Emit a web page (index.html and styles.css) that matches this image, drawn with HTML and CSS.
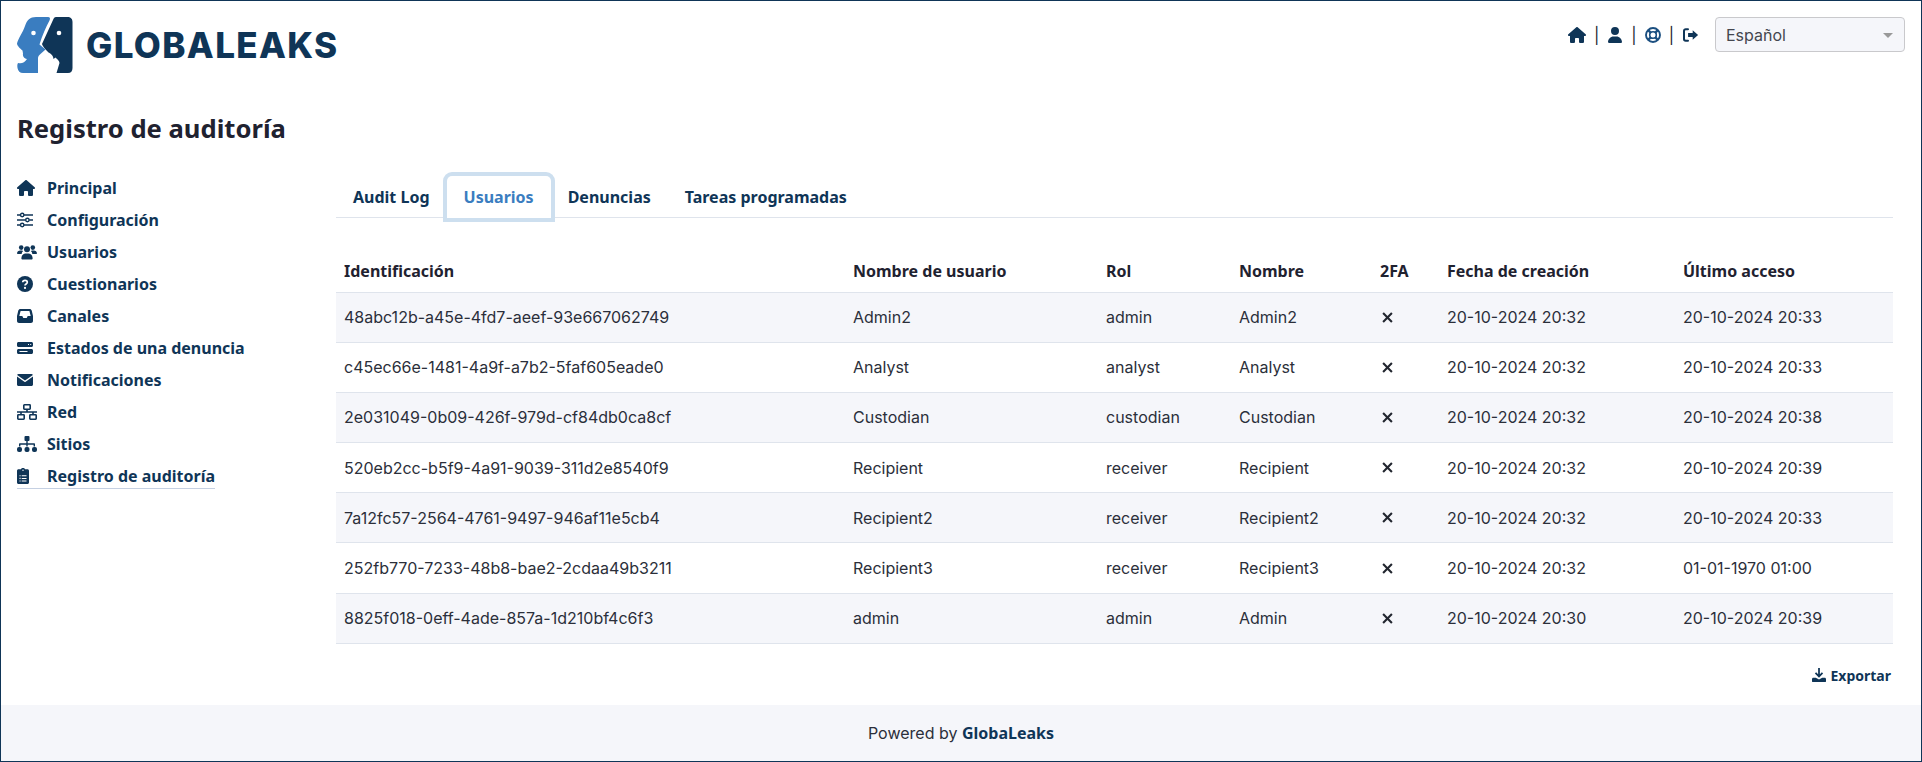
FILE: index.html
```html
<!DOCTYPE html>
<html lang="es">
<head>
    <meta charset="UTF-8">
    <title>GlobaLeaks</title>
    <meta name="viewport" content="width=device-width, initial-scale=1.0">
    <link rel="stylesheet" href="styles.css">
</head>
<body>

    <!-- Icon sprite -->
    <svg class="sprite" xmlns="http://www.w3.org/2000/svg">
        <symbol id="i-home" viewBox="0 0 576 512"><path d="M575.8 255.5c0 18-15 32.1-32 32.1h-32l.7 160.2c0 2.7-.2 5.4-.5 8.1V472c0 22.1-17.9 40-40 40H456c-1.1 0-2.2 0-3.3-.1c-1.4 .1-2.8 .1-4.2 .1H392c-22.1 0-40-17.9-40-40V384c0-17.7-14.3-32-32-32H256c-17.7 0-32 14.3-32 32v88c0 22.1-17.9 40-40 40H128.1c-1.5 0-3-.1-4.5-.2c-1.2 .1-2.4 .2-3.6 .2H104c-22.1 0-40-17.9-40-40V360c0-.9 0-1.9 .1-2.8V287.6H32c-18 0-32-14-32-32.1c0-9 3-17 10-24L266.4 8c7-7 15-8 22-8s15 2 21 7L564.8 231.5c8 7 12 15 11 24z"/></symbol>
        <symbol id="i-user" viewBox="0 0 448 512"><path d="M224 256A128 128 0 1 0 224 0a128 128 0 1 0 0 256zm-45.7 48C79.8 304 0 383.8 0 482.3C0 498.7 13.3 512 29.7 512H418.3c16.4 0 29.7-13.3 29.7-29.7C448 383.8 368.2 304 269.7 304H178.3z"/></symbol>
        <symbol id="i-ring" viewBox="0 0 16 16"><g fill="none" stroke="currentColor"><circle cx="8" cy="8" r="7" stroke-width="1.9"/><circle cx="8" cy="8" r="3.3" stroke-width="1.6"/><path d="M3.2 3.2l2.700 2.700M12.800 3.200l-2.700 2.700M3.200 12.800l2.700-2.700M12.800 12.800l-2.700-2.700" stroke-width="2.4"/></g></symbol>
        <symbol id="i-out" viewBox="0 0 16 16"><path d="M5.500 2.200H3.200A1.700 1.700 0 0 0 1.500 3.900v8.200a1.700 1.700 0 0 0 1.700 1.700h2.300" fill="none" stroke="currentColor" stroke-width="2" stroke-linecap="round"/><path d="M10.200 3.300L15.600 8l-5.400 4.700V10H5.600V6h4.600z"/></symbol>
        <symbol id="i-sliders" viewBox="0 0 16 16"><g fill="none" stroke="currentColor" stroke-width="1.4"><path d="M0 3h3.400M7 3h9M0 8h8.600M12.200 8H16M0 13h3.400M7 13h9"/><circle cx="5.200" cy="3" r="1.700"/><circle cx="10.400" cy="8" r="1.700"/><circle cx="5.200" cy="13" r="1.700"/></g></symbol>
        <symbol id="i-users" viewBox="0 0 20 16"><circle cx="4.200" cy="3.600" r="2.300"/><circle cx="15.800" cy="3.600" r="2.300"/><circle cx="10" cy="5.200" r="3"/><path d="M0 9.600C0 7.600 1.500 6.600 3.200 6.600h1.600c.6 0 1 .2 1.300.4-.8.8-1.400 1.800-1.400 3H.8C.3 10 0 9.900 0 9.600zM20 9.600c0-2-1.500-3-3.200-3h-1.600c-.6 0-1 .2-1.300.4.8.8 1.400 1.800 1.400 3h3.900c.5 0 .8-.1.8-.4z"/><path d="M4.400 14.400c0-2.600 1.800-5 4-5h3.200c2.200 0 4 2.400 4 5 0 .6-.5 1.100-1.100 1.100H5.500c-.6 0-1.100-.5-1.100-1.100z"/></symbol>
        <symbol id="i-question" viewBox="0 0 16 16"><circle cx="8" cy="8" r="8"/><path d="M5.700 6.300C5.800 5 6.800 4.300 8 4.300c1.300 0 2.300.8 2.300 2 0 1.700-2.300 1.600-2.300 3.200" fill="none" stroke="#fff" stroke-width="1.7"/><circle cx="8" cy="11.900" r="1.100" fill="#fff"/></symbol>
        <symbol id="i-inbox" viewBox="0 0 16 14"><path fill-rule="evenodd" d="M3.400 0h9.200c1 0 1.800.6 2.100 1.500L16 7v5c0 1.100-.9 2-2 2H2c-1.100 0-2-.9-2-2V7l1.300-5.500C1.600.6 2.400 0 3.400 0zm.2 2L2.300 7h3l1 2h3.400l1-2h3L12.400 2z"/></symbol>
        <symbol id="i-server" viewBox="0 0 16 12"><path fill-rule="evenodd" d="M1.500 0h13C15.300 0 16 .7 16 1.500v2c0 .8-.7 1.500-1.500 1.500h-13C.7 5 0 4.300 0 3.500v-2C0 .7.7 0 1.500 0zm9.500 2v1h1V2zm2.200 0v1h1V2zM1.500 7h13c.8 0 1.500.7 1.500 1.500v2c0 .8-.7 1.500-1.500 1.500h-13C.7 12 0 11.300 0 10.500v-2C0 7.700.7 7 1.500 7zm1 2v1h8V9z"/></symbol>
        <symbol id="i-mail" viewBox="0 0 16 12"><path d="M1.500 0h13c.6 0 1.200.4 1.400.9L8 6.400.1.900C.3.400.9 0 1.500 0zM0 2.600l7.400 5.200c.4.3.8.3 1.200 0L16 2.600v7.900c0 .8-.7 1.500-1.500 1.500h-13C.7 12 0 11.300 0 10.500z"/></symbol>
        <symbol id="i-network" viewBox="0 0 20 16"><g fill="none" stroke="currentColor" stroke-width="1.6"><rect x="6.800" y=".8" width="6.400" height="4.400" rx=".6"/><rect x=".8" y="10.800" width="6.400" height="4.400" rx=".6"/><rect x="12.800" y="10.800" width="6.400" height="4.400" rx=".6"/><path d="M10 5.200v2.800M0 8h20M4 8v2.800M16 8v2.800"/></g></symbol>
        <symbol id="i-sitemap" viewBox="0 0 20 16"><rect x="7.500" y="0" width="5" height="5" rx="1"/><path d="M9.300 5h1.400v2.300H17c.6 0 1 .4 1 1v2.200h-1.400V8.700h-5.900v1.800H9.300V8.700H3.400v1.800H2V8.300c0-.6.400-1 1-1h6.300z"/><rect x="0" y="11" width="5" height="5" rx="2"/><rect x="7.500" y="11" width="5" height="5" rx="2"/><rect x="15" y="11" width="5" height="5" rx="2"/></symbol>
        <symbol id="i-clipboard" viewBox="0 0 12 16"><path fill-rule="evenodd" d="M4 1.300C4.200.5 5 0 6 0s1.800.5 2 1.300h2.500c.8 0 1.500.7 1.500 1.500v11.700c0 .8-.7 1.500-1.500 1.500h-9C.7 16 0 15.300 0 14.500V2.800C0 2 .7 1.300 1.500 1.300zM5.300 2.200a.7.7 0 1 0 1.400 0 .7.7 0 1 0-1.400 0zM2.500 7.200v1.100h1.100V7.200zm2.200.1v1h4.800v-1zm-2.200 2.500v1.100h1.100V9.800zm2.200.1v1h4.800v-1zm-2.200 2.500v1.100h1.100v-1.100zm2.200.1v1h4.800v-1z"/></symbol>
        <symbol id="i-download" viewBox="0 0 16 16"><path d="M7 0h2v7.200l2.300-2.300 1.400 1.400L8 11 3.300 6.300l1.400-1.400L7 7.200z"/><path d="M0 12.500C0 11.700.7 11 1.500 11h2.800L8 13l3.700-2h2.800c.8 0 1.500.7 1.500 1.500V15c0 .6-.4 1-1 1H1c-.6 0-1-.4-1-1z"/></symbol>
        <symbol id="i-x" viewBox="0 0 10 10"><path d="M1 1l8 8M9 1L1 9" fill="none" stroke="currentColor" stroke-width="1.9"/></symbol>
    </svg>

    <div class="page">

        <!-- Top bar -->
        <header class="topbar">
            <a class="brand" href="#">
                <svg class="brand-mark" viewBox="0 0 56 56" xmlns="http://www.w3.org/2000/svg">
                    <path fill="#3a7dc0" d="M19 0H31C33 0 33.500 1.500 32.500 3.500C29 10 25 19 22.500 27.500L28.500 32.500L24 36.500C22 38 21 39.500 21 41V56H6C3 56 1 54 .5 51C0 48 .5 46 1.500 46C4 47 8 45.500 10 42C7 41.500 5.500 39 6 36.500L5.500 33.500C3 31.500 0 28.500 0 26.500C1 22 6 15 8 9C10 3 13 0 19 0Z"/>
                    <circle fill="#fff" cx="16.500" cy="16" r="2.300"/>
                    <path fill="#0f3557" d="M39 0H50C54 0 55.500 2 55.500 5V51C55.500 54 54 56 51 56H39.500L42.500 46C42.500 44 40 42 38.500 40.500L36.500 42C36 38 33 36 31.500 35.500C28 32 25.500 29 25 27L36 3C36.800 1 37.500 0 39 0Z"/>
                    <circle fill="#fff" cx="42" cy="16" r="2.300"/>
                </svg>
                <span class="brand-name">GLOBALEAKS</span>
            </a>
            <div class="user-tools">
                <a href="#"><svg class="ico ico-home"><use href="#i-home"/></svg></a>
                <span class="sep">|</span>
                <a href="#"><svg class="ico ico-user"><use href="#i-user"/></svg></a>
                <span class="sep">|</span>
                <a href="#"><svg class="ico ico-ring"><use href="#i-ring"/></svg></a>
                <span class="sep">|</span>
                <a href="#"><svg class="ico ico-out"><use href="#i-out"/></svg></a>
                <div class="lang-box">
                    <select class="lang-select">
                        <option>Español</option>
                    </select>
                </div>
            </div>
        </header>

        <h1 class="page-title">Registro de auditoría</h1>

        <div class="content">
            <!-- Side menu -->
            <nav class="sidenav">
                <a class="nav-item" href="#"><span class="nav-ico"><svg class="ico-home"><use href="#i-home"/></svg></span>Principal</a>
                <a class="nav-item" href="#"><span class="nav-ico"><svg class="ico-wide"><use href="#i-sliders"/></svg></span>Configuración</a>
                <a class="nav-item" href="#"><span class="nav-ico"><svg class="ico-users"><use href="#i-users"/></svg></span>Usuarios</a>
                <a class="nav-item" href="#"><span class="nav-ico"><svg class="ico-wide"><use href="#i-question"/></svg></span>Cuestionarios</a>
                <a class="nav-item" href="#"><span class="nav-ico"><svg class="ico-wide"><use href="#i-inbox"/></svg></span>Canales</a>
                <a class="nav-item" href="#"><span class="nav-ico"><svg class="ico-wide"><use href="#i-server"/></svg></span>Estados de una denuncia</a>
                <a class="nav-item" href="#"><span class="nav-ico"><svg class="ico-wide"><use href="#i-mail"/></svg></span>Notificaciones</a>
                <a class="nav-item" href="#"><span class="nav-ico"><svg class="ico-users"><use href="#i-network"/></svg></span>Red</a>
                <a class="nav-item" href="#"><span class="nav-ico"><svg class="ico-users"><use href="#i-sitemap"/></svg></span>Sitios</a>
                <a class="nav-item nav-current" href="#"><span class="nav-ico"><svg class="ico-clip"><use href="#i-clipboard"/></svg></span>Registro de auditoría</a>
            </nav>

            <main class="panel">
                <div class="tabs">
                    <a class="tab" href="#">Audit Log</a>
                    <a class="tab tab-active" href="#">Usuarios</a>
                    <a class="tab" href="#">Denuncias</a>
                    <a class="tab" href="#">Tareas programadas</a>
                </div>

                <table class="audit-table">
                    <colgroup>
                        <col class="col-id">
                        <col class="col-user">
                        <col class="col-role">
                        <col class="col-name">
                        <col class="col-2fa">
                        <col class="col-date">
                        <col>
                    </colgroup>
                    <thead>
                        <tr>
                            <th>Identificación</th>
                            <th>Nombre de usuario</th>
                            <th>Rol</th>
                            <th>Nombre</th>
                            <th>2FA</th>
                            <th>Fecha de creación</th>
                            <th>Último acceso</th>
                        </tr>
                    </thead>
                    <tbody>
                        <tr>
                            <td>48abc12b-a45e-4fd7-aeef-93e667062749</td>
                            <td>Admin2</td>
                            <td>admin</td>
                            <td>Admin2</td>
                            <td><svg class="ico-x"><use href="#i-x"/></svg></td>
                            <td>20-10-2024 20:32</td>
                            <td>20-10-2024 20:33</td>
                        </tr>
                        <tr>
                            <td>c45ec66e-1481-4a9f-a7b2-5faf605eade0</td>
                            <td>Analyst</td>
                            <td>analyst</td>
                            <td>Analyst</td>
                            <td><svg class="ico-x"><use href="#i-x"/></svg></td>
                            <td>20-10-2024 20:32</td>
                            <td>20-10-2024 20:33</td>
                        </tr>
                        <tr>
                            <td>2e031049-0b09-426f-979d-cf84db0ca8cf</td>
                            <td>Custodian</td>
                            <td>custodian</td>
                            <td>Custodian</td>
                            <td><svg class="ico-x"><use href="#i-x"/></svg></td>
                            <td>20-10-2024 20:32</td>
                            <td>20-10-2024 20:38</td>
                        </tr>
                        <tr>
                            <td>520eb2cc-b5f9-4a91-9039-311d2e8540f9</td>
                            <td>Recipient</td>
                            <td>receiver</td>
                            <td>Recipient</td>
                            <td><svg class="ico-x"><use href="#i-x"/></svg></td>
                            <td>20-10-2024 20:32</td>
                            <td>20-10-2024 20:39</td>
                        </tr>
                        <tr>
                            <td>7a12fc57-2564-4761-9497-946af11e5cb4</td>
                            <td>Recipient2</td>
                            <td>receiver</td>
                            <td>Recipient2</td>
                            <td><svg class="ico-x"><use href="#i-x"/></svg></td>
                            <td>20-10-2024 20:32</td>
                            <td>20-10-2024 20:33</td>
                        </tr>
                        <tr>
                            <td>252fb770-7233-48b8-bae2-2cdaa49b3211</td>
                            <td>Recipient3</td>
                            <td>receiver</td>
                            <td>Recipient3</td>
                            <td><svg class="ico-x"><use href="#i-x"/></svg></td>
                            <td>20-10-2024 20:32</td>
                            <td>01-01-1970 01:00</td>
                        </tr>
                        <tr>
                            <td>8825f018-0eff-4ade-857a-1d210bf4c6f3</td>
                            <td>admin</td>
                            <td>admin</td>
                            <td>Admin</td>
                            <td><svg class="ico-x"><use href="#i-x"/></svg></td>
                            <td>20-10-2024 20:30</td>
                            <td>20-10-2024 20:39</td>
                        </tr>
                    </tbody>
                </table>

                <div class="table-actions">
                    <a class="export-link" href="#"><svg class="ico-export"><use href="#i-download"/></svg>Exportar</a>
                </div>
            </main>
        </div>

        <footer class="footer">Powered by <a href="#">GlobaLeaks</a></footer>
    </div>

</body>
</html>
```

FILE: styles.css
```css
/* General Styles */
* {
    box-sizing: border-box;
}

html, body {
    margin: 0;
    padding: 0;
}

body {
    font-family: 'Inter', sans-serif;
    font-size: 16px;
    color: #2b2f3a;
    background-color: #fff;
}

a {
    color: #0f3557;
    text-decoration: none;
}

svg {
    fill: currentColor;
}

.sprite {
    display: none;
}

.page {
    height: 762px;
    display: flex;
    flex-direction: column;
    border: 1px solid #0f3557;
    overflow: hidden;
}

/* Top bar */
.topbar {
    display: flex;
    justify-content: space-between;
    align-items: flex-start;
    padding: 16px 16px 0 16px;
}

.brand {
    display: flex;
    align-items: center;
    height: 56px;
}

.brand-mark {
    width: 56px;
    height: 56px;
}

.brand-name {
    margin-left: 13px;
    font-family: 'Inter', sans-serif;
    font-weight: 800;
    font-size: 35px;
    letter-spacing: 1.35px;
    color: #0f3557;
}

.user-tools {
    display: flex;
    align-items: center;
    height: 35px;
    color: #0f3557;
}

.user-tools a {
    display: flex;
}

.sep {
    margin: 0 8px;
    font-size: 16px;
    color: #22262f;
}

.ico {
    height: 16px;
}

.ico-home { width: 18px; height: 16px; }
.ico-user { width: 16px; height: 16px; }
.ico-ring { width: 16px; height: 16px; color: #1b4f80; }
.ico-out { width: 17px; height: 16px; }

.lang-box {
    position: relative;
    margin-left: 16px;
    width: 190px;
}

.lang-box::after {
    content: "";
    position: absolute;
    right: 12px;
    top: 16px;
    border-left: 5px solid transparent;
    border-right: 5px solid transparent;
    border-top: 5px solid #999;
}

.lang-select {
    display: block;
    width: 100%;
    height: 35px;
    padding: 0 10px;
    font-family: 'Inter', sans-serif;
    font-size: 16px;
    color: #44474f;
    background-color: #f5f6fa;
    border: 1px solid #c9c9cc;
    border-radius: 4px;
    appearance: none;
}

.page-title {
    margin: 38px 0 0 16px;
    font-family: 'Noto Sans', sans-serif;
    font-size: 25.6px;
    font-weight: 700;
    line-height: 36px;
    color: #1f2230;
}

/* Two columns below the title */
.content {
    flex: 1;
    display: flex;
    padding-right: 28px;
}

.sidenav {
    width: 335px;
    padding: 25px 0 0 16px;
    display: flex;
    flex-direction: column;
    align-items: flex-start;
}

.nav-item {
    display: flex;
    align-items: center;
    height: 32px;
    font-family: 'Noto Sans', sans-serif;
    font-weight: 700;
    font-size: 16px;
}

.nav-current {
    height: 26px;
    margin-top: 3px;
    border-bottom: 1px solid #c5d0e2;
}

.nav-ico {
    display: flex;
    align-items: center;
    width: 30px;
}

.ico-wide { width: 16px; height: 16px; }
.ico-users { width: 20px; height: 16px; }
.ico-clip { width: 12px; height: 16px; }

/* Tabs */
.panel {
    flex: 1;
    min-width: 0;
}

.tabs {
    display: flex;
    margin-top: 29px;
    height: 42px;
    border-bottom: 1px solid #dfe4ec;
}

.tab {
    height: 42px;
    padding: 0 17px;
    font-family: 'Noto Sans', sans-serif;
    font-weight: 700;
    font-size: 16px;
    line-height: 42px;
}

.tab-active {
    color: #3a7dc0;
    background-color: #fff;
    border-radius: 5px 5px 0 0;
    box-shadow: 0 0 0 4px #cddfef;
}

/* Table */
.audit-table {
    width: 100%;
    margin-top: 34px;
    border-collapse: collapse;
    table-layout: fixed;
}

.col-id { width: 509px; }
.col-user { width: 253px; }
.col-role { width: 133px; }
.col-name { width: 141px; }
.col-2fa { width: 67px; }
.col-date { width: 236px; }

.audit-table th {
    height: 40px;
    padding: 0 8px 2px 8px;
    text-align: left;
    font-family: 'Noto Sans', sans-serif;
    font-size: 16px;
    font-weight: 700;
    color: #1f2230;
    border-bottom: 1px solid #dfe4ec;
}

.audit-table td {
    height: 50.2px;
    padding: 0 8px;
    border-bottom: 1px solid #dfe4ec;
}

.audit-table tbody tr:nth-child(odd) {
    background-color: #f5f6fa;
}

.ico-x {
    display: block;
    width: 11px;
    height: 11px;
    margin-left: 2px;
    color: #22262f;
}

.table-actions {
    display: flex;
    justify-content: flex-end;
    padding: 22px 2px 0 0;
}

.export-link {
    display: flex;
    align-items: center;
    font-family: 'Noto Sans', sans-serif;
    font-weight: 700;
    font-size: 14px;
}

.ico-export {
    width: 14px;
    height: 14px;
    margin-right: 4px;
}

/* Footer */
.footer {
    height: 56px;
    line-height: 56px;
    text-align: center;
    font-size: 16px;
    color: #2b2f3a;
    background-color: #f5f6fa;
}

.footer a {
    font-family: 'Noto Sans', sans-serif;
    font-weight: 700;
}
```
